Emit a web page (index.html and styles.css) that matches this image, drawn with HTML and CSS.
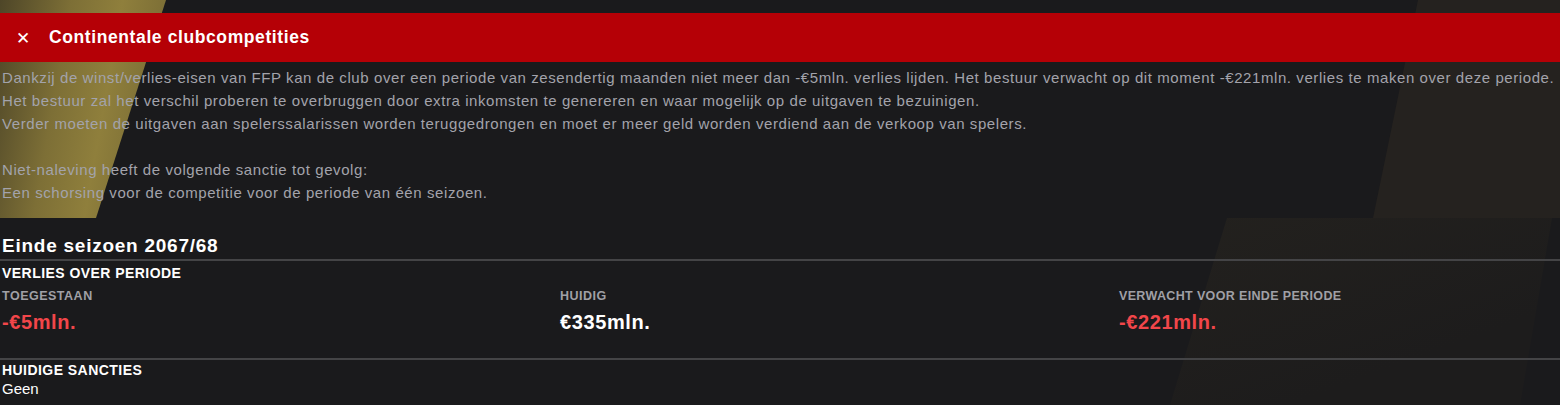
FILE: index.html
```html
<!DOCTYPE html>
<html lang="nl">
<head>
<meta charset="utf-8">
<title>Continentale clubcompetities</title>
<link rel="stylesheet" href="styles.css">
</head>
<body>
<div class="deco deco-gold"></div>
<div class="deco deco-right-top"></div>
<div class="deco deco-right-bottom"></div>
<main class="page">
  <header class="banner">
    <span class="close">&#x2715;</span>
    <h1 class="banner-title">Continentale clubcompetities</h1>
  </header>
  <section class="intro">
    <p>Dankzij de winst/verlies-eisen van FFP kan de club over een periode van zesendertig maanden niet meer dan -€5mln. verlies lijden. Het bestuur verwacht op dit moment -€221mln. verlies te maken over deze periode.</p>
    <p>Het bestuur zal het verschil proberen te overbruggen door extra inkomsten te genereren en waar mogelijk op de uitgaven te bezuinigen.</p>
    <p>Verder moeten de uitgaven aan spelerssalarissen worden teruggedrongen en moet er meer geld worden verdiend aan de verkoop van spelers.</p>
    <p class="blank">&nbsp;</p>
    <p>Niet-naleving heeft de volgende sanctie tot gevolg:</p>
    <p>Een schorsing voor de competitie voor de periode van één seizoen.</p>
  </section>
  <h2 class="season">Einde seizoen 2067/68</h2>
  <section class="block">
    <h3 class="block-title">VERLIES OVER PERIODE</h3>
    <div class="stats">
      <div class="stat">
        <div class="stat-label">TOEGESTAAN</div>
        <div class="stat-value neg">-€5mln.</div>
      </div>
      <div class="stat">
        <div class="stat-label">HUIDIG</div>
        <div class="stat-value">€335mln.</div>
      </div>
      <div class="stat">
        <div class="stat-label wide">VERWACHT VOOR EINDE PERIODE</div>
        <div class="stat-value neg">-€221mln.</div>
      </div>
    </div>
  </section>
  <section class="block sanctions">
    <h3 class="block-title">HUIDIGE SANCTIES</h3>
    <div class="plain">Geen</div>
  </section>
</main>
</body>
</html>
```

FILE: styles.css
```css
html, body {
  margin: 0;
  padding: 0;
  background: #1a1a1c;
  height: 405px;
  overflow: hidden;
}
body {
  position: relative;
  font-family: "Liberation Sans", Arial, sans-serif;
  color: #a3a3ab;
}
.deco {
  position: absolute;
  pointer-events: none;
}
.deco-gold {
  left: 0;
  top: 0;
  width: 166px;
  height: 218px;
  background: linear-gradient(100deg, #4e4628 0%, #7d6f36 35%, #8f7f3c 60%, #6e6231 100%);
  clip-path: polygon(0 0, 166px 0, 96px 218px, 0 218px);
}
.deco-right-top {
  left: 1373px;
  top: 0;
  width: 187px;
  height: 218px;
  background: #25221f;
  clip-path: polygon(45px 0, 187px 0, 187px 218px, 0 218px);
}
.deco-right-bottom {
  left: 1170px;
  top: 218px;
  width: 390px;
  height: 187px;
  background: linear-gradient(160deg, #23211e 0%, #1d1c1c 70%);
  clip-path: polygon(57px 0, 382px 0, 350px 187px, 0 187px);
}
.page {
  position: relative;
  padding-top: 13px;
}
.banner {
  display: flex;
  align-items: center;
  height: 49px;
  background: #b50006;
  color: #fff;
  padding-left: 16px;
}
.close {
  font-size: 17px;
  font-weight: bold;
  width: 33px;
  font-family: "DejaVu Sans", sans-serif;
}
.banner-title {
  margin: 0;
  font-size: 17.5px;
  font-weight: bold;
  letter-spacing: 0.6px;
}
.intro {
  padding: 4px 0 0 2px;
  margin-bottom: 30px;
}
.intro p {
  margin: 0;
  font-size: 15px;
  line-height: 23px;
  letter-spacing: 0.58px;
  white-space: nowrap;
}
.season {
  margin: 0;
  padding: 0 2px 1px;
  font-size: 19px;
  line-height: 24px;
  color: #fff;
  font-weight: bold;
  letter-spacing: 0.75px;
  border-bottom: 2px solid #444446;
}
.block {
  padding: 2px 2px 0;
}
.block-title {
  margin: 0;
  font-size: 14px;
  line-height: 20px;
  color: #fff;
  font-weight: bold;
  letter-spacing: 0.45px;
}
.stats {
  display: grid;
  grid-template-columns: 558px 559px 1fr;
  padding-top: 4px;
  padding-bottom: 25px;
  border-bottom: 2px solid #444446;
  margin: 0 -2px;
  padding-left: 2px;
}
.stat-label {
  font-size: 12.5px;
  line-height: 18px;
  font-weight: bold;
  color: #a0a0a6;
  letter-spacing: 0.5px;
}
.stat-label.wide {
  letter-spacing: 0.35px;
}
.stat-value {
  margin-top: 6px;
  font-size: 20px;
  line-height: 22px;
  font-weight: bold;
  color: #fff;
  letter-spacing: 0.6px;
}
.stat-value.neg {
  color: #f2464a;
}
.sanctions {
  padding-top: 0;
}
.plain {
  font-size: 15px;
  line-height: 18px;
  color: #fff;
}
```
